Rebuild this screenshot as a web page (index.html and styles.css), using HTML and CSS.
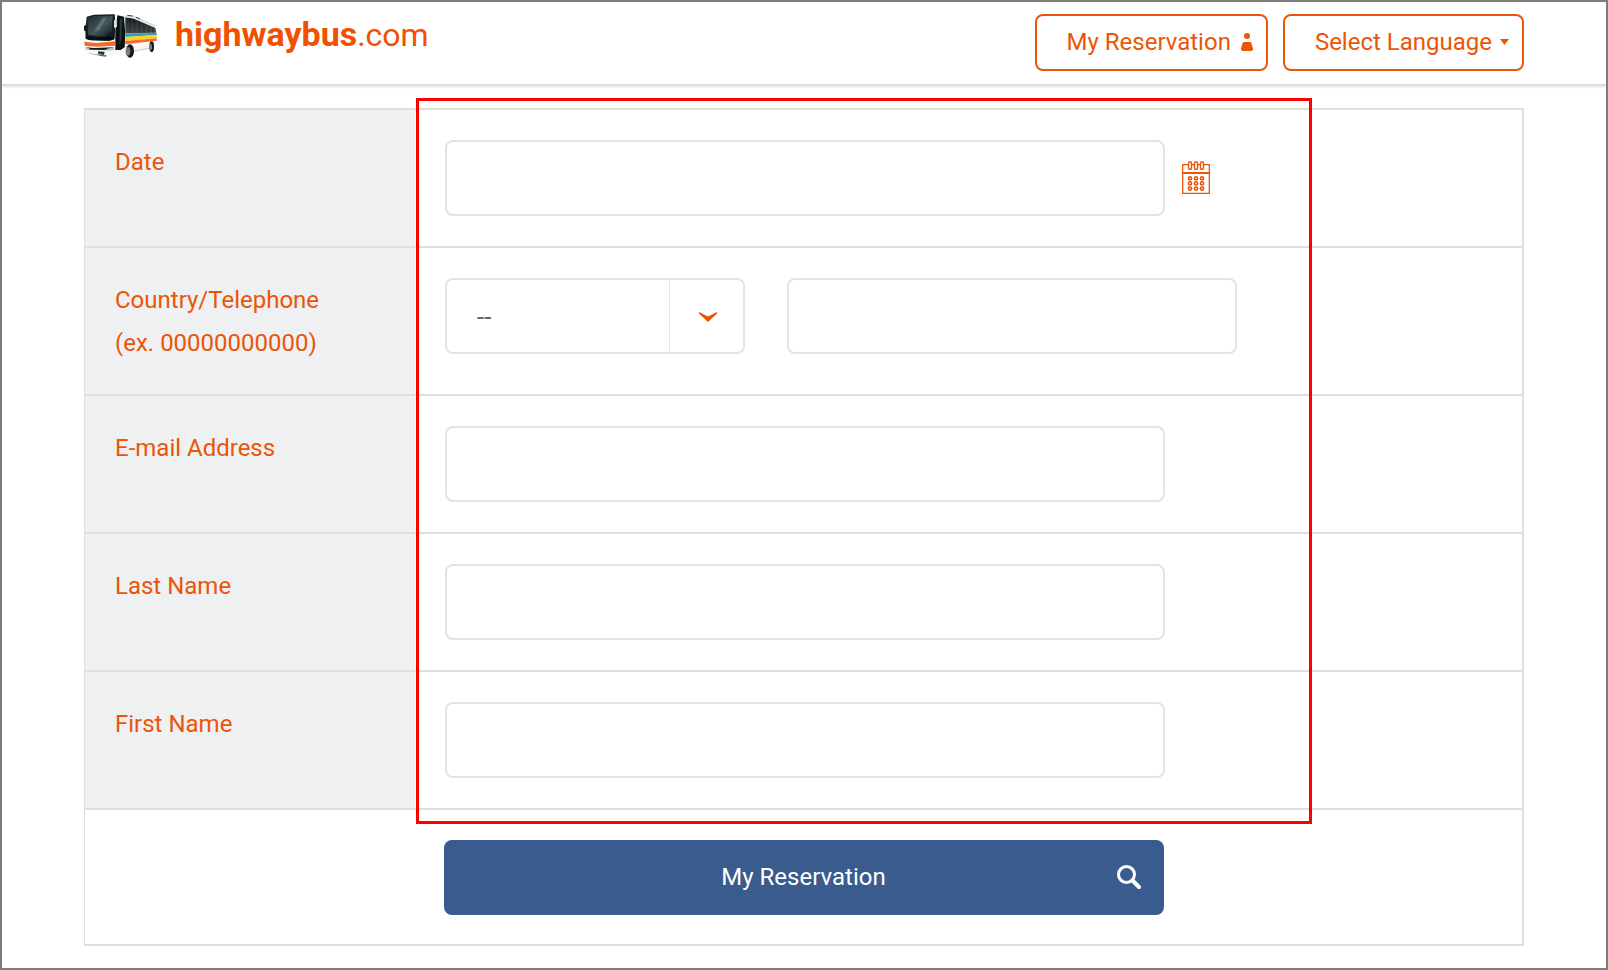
FILE: index.html
```html
<!DOCTYPE html>
<html lang="en">
<head>
<meta charset="utf-8">
<title>highwaybus.com - My Reservation</title>
<link rel="stylesheet" href="styles.css">
</head>
<body>
<div class="frame">
  <header class="header">
    <div class="container header-inner">
      <a class="logo" href="#">
        <svg class="logo-bus" viewBox="0 0 222 132" aria-hidden="true">
          <defs>
            <linearGradient id="glass" x1="0" y1="0" x2="1" y2="1"><stop offset="0" stop-color="#1d2a2d"/><stop offset=".55" stop-color="#43565b"/><stop offset="1" stop-color="#12191a"/></linearGradient>
            <linearGradient id="side" x1="0" y1="0" x2="0" y2="1"><stop offset="0" stop-color="#1b2024"/><stop offset="1" stop-color="#464e54"/></linearGradient>
          </defs>
          <path d="M8 6 30 2 96 0 118 2 150 8 166 14 214 38 218 44 218 90 210 104 148 116 112 122 60 126 6 118 1 106 0 50Z" fill="#f8f8f8"/>
          <path d="M8 8 30 2 92 1 94 30 92 76 78 80 20 79 5 74 4 48Z" fill="#141d1f"/>
          <path d="M10 12 30 6 86 5 84 50 60 68 12 62Z" fill="url(#glass)"/>
          <path d="M56 12 70 10 44 50 30 52Z" fill="#5c6f73"/>
          <path d="M6 66 40 72 90 66 90 76 70 80 16 78 5 74Z" fill="#080d0d"/>
          <path d="M0 36 8 32 8 50 0 50Z" fill="#11191b"/>
          <path d="M100 4 120 8 124 60 122 100 110 108 94 108 94 50Z" fill="#0c1112"/>
          <path d="M108 14 115 14 112 80 106 92Z" fill="#263a33"/>
          <path d="M90 18 98 20 99 38 90 42Z" fill="#dfe3e3"/>
          <path d="M124 10 150 14 214 42 217 56 124 58Z" fill="url(#side)"/>
          <path d="M138 12V57M152 16V57M166 22V57M180 28V57M194 34V57M206 39V57" stroke="#12171a" stroke-width="1.500"/>
          <path d="M122 7 150 8 214 37" fill="none" stroke="#d6dadb" stroke-width="5"/>
          <path d="M130 4 146 6M156 10 168 15" stroke="#3a4246" stroke-width="3"/>
          <path d="M124 58 218 57 218 63 124 69Z" fill="#3a9ea6"/>
          <path d="M124 69 218 63 218 73 124 81Z" fill="#f9cf2d"/>
          <path d="M124 81 218 73 218 80 124 91Z" fill="#f36b26"/>
          <path d="M1 83 36 87 94 82 94 95 36 98 2 95Z" fill="#f26a2c"/>
          <path d="M6 100 30 102 88 100 84 105 60 108 18 107Z" fill="#171d1e"/>
          <path d="M3 100 16 102 16 109 5 106ZM68 104 90 100 90 108 70 110Z" fill="#b3c1cc"/>
          <path d="M42 112 62 113 60 123 43 121Z" fill="#18491f"/>
          <path d="M6 116 42 122 68 124 66 128 54 127Z" fill="#5d6465"/>
          <ellipse cx="138" cy="111" rx="12" ry="20" fill="#16191a"/>
          <ellipse cx="132" cy="112" rx="7" ry="13" fill="#747b7c"/>
          <ellipse cx="203" cy="98" rx="7" ry="16" fill="#16191a"/>
          <ellipse cx="200" cy="99" rx="4" ry="10" fill="#747b7c"/>
          <path d="M150 111 194 103" stroke="#b4b8b8" stroke-width="2"/>
        </svg>
        <span class="logo-text"><b>highwaybus</b>.com</span>
      </a>
      <nav class="header-nav">
        <a class="nav-button" href="#">My Reservation
          <svg class="icon-person" viewBox="0 0 12 18" aria-hidden="true"><circle cx="6" cy="3" r="3"/><path d="M3 9h6q1 0 1.400 1L12 15.500q.2 2-1.500 2.500h-9Q-.2 17.500 0 15.500L1.600 10Q2 9 3 9Z"/></svg>
        </a>
        <button class="nav-button" type="button">Select Language
          <svg class="icon-caret" viewBox="0 0 9 6" aria-hidden="true"><path d="M0 0h9L4.500 6Z"/></svg>
        </button>
      </nav>
    </div>
  </header>
  <main class="container">
    <form class="form">
      <div class="row">
        <label class="label" for="date">Date</label>
        <div class="field">
          <input class="input" id="date" type="text">
          <button class="calendar" type="button" aria-label="Open calendar">
            <svg viewBox="0 0 28 33" aria-hidden="true">
              <g fill="none" stroke="#eb5507">
                <path d="M.6 3.600h26.800v28.800H.6Z" stroke-width="1.400"/>
                <path d="M0 12h28" stroke-width="2"/>
                <g fill="#fff" stroke-width="1.400"><rect x="6.500" y=".7" width="3" height="7.800" rx="1.500"/><rect x="12.500" y=".7" width="3" height="7.800" rx="1.500"/><rect x="18.500" y=".7" width="3" height="7.800" rx="1.500"/></g>
                <g stroke-width="1.600"><circle cx="8" cy="17.300" r="1.600"/><circle cx="14" cy="17.300" r="1.600"/><circle cx="20" cy="17.300" r="1.600"/><circle cx="8" cy="22.400" r="1.600"/><circle cx="14" cy="22.400" r="1.600"/><circle cx="20" cy="22.400" r="1.600"/><circle cx="8" cy="27.600" r="1.600"/><circle cx="14" cy="27.600" r="1.600"/><circle cx="20" cy="27.600" r="1.600"/></g>
              </g>
            </svg>
          </button>
        </div>
      </div>
      <div class="row row-tall">
        <label class="label" for="tel">Country/Telephone<br>(ex. 00000000000)</label>
        <div class="field">
          <div class="select-wrap">
            <select class="select" aria-label="Country"><option>--</option></select>
            <span class="select-arrow"><svg viewBox="0 0 18 10" aria-hidden="true"><path d="M0 0 9 4.600 18 0V1.500L9 10 0 1.500Z"/></svg></span>
          </div>
          <input class="input input-tel" id="tel" type="tel">
        </div>
      </div>
      <div class="row">
        <label class="label" for="email">E-mail Address</label>
        <div class="field"><input class="input" id="email" type="email"></div>
      </div>
      <div class="row">
        <label class="label" for="last">Last Name</label>
        <div class="field"><input class="input" id="last" type="text"></div>
      </div>
      <div class="row">
        <label class="label" for="first">First Name</label>
        <div class="field"><input class="input" id="first" type="text"></div>
      </div>
      <div class="actions">
        <button class="submit" type="submit">My Reservation
          <svg class="icon-search" viewBox="0 0 24 24" aria-hidden="true"><circle cx="9.500" cy="9.500" r="8" stroke-width="3"/><path d="m15.500 15.500 6.500 6.500" stroke-width="4"/></svg>
        </button>
      </div>
      <div class="highlight"></div>
    </form>
  </main>
</div>
</body>
</html>
```
FILE: styles.css
```css
* {
  box-sizing: border-box;
}

body {
  margin: 0;
  background: #fff;
  color: #eb5507;
  font: 24px/43px Roboto, "Liberation Sans", sans-serif;
}

.frame {
  min-height: 100vh;
  border: 2px solid #7f7c7c;
}

.container {
  max-width: 1440px;
  margin: 0 auto;
}

.header {
  border-bottom: 2px solid #dedede;
  box-shadow: 0 1px 3px #e4e4e4;
  clip-path: inset(0 0 -4px);
}

.header-inner {
  display: flex;
  justify-content: space-between;
  align-items: flex-start;
  height: 82px;
  padding-top: 12px;
}

.logo {
  display: flex;
  gap: 17px;
  color: #f05000;
  text-decoration: none;
}

.logo-bus {
  width: 74px;
  height: 44px;
}

.logo-text {
  font-size: 32px;
  line-height: 41px;
}

.logo-text b {
  font-size: 34px;
  font-weight: 700;
}

.header-nav {
  display: flex;
  gap: 15px;
}

.nav-button {
  display: flex;
  align-items: center;
  height: 57px;
  padding: 0 13px 0 30px;
  border: 2px solid #eb5507;
  border-radius: 8px;
  background: #fff;
  color: #eb5507;
  font: inherit;
  text-decoration: none;
}

.nav-button svg {
  margin-bottom: 2px;
  fill: #eb5507;
}

.icon-person {
  width: 12px;
  height: 18px;
  margin-left: 10px;
}

.icon-caret {
  width: 9px;
  height: 6px;
  margin-left: 8px;
}

.form {
  position: relative;
  margin-top: 22px;
  border: 2px solid #dfdfdf;
  border-left-width: 1px;
}

.row {
  display: grid;
  grid-template-columns: 330px 1fr;
  border-bottom: 2px solid #dfdfdf;
}

.label {
  padding: 31px 30px 29px;
  background: #eff0f2;
}

.field {
  display: flex;
  align-items: center;
  padding: 30px;
}

.row-tall .field {
  align-items: flex-start;
  padding-bottom: 40px;
}

.input {
  width: 720px;
  height: 76px;
  padding: 0 28px;
  border: 2px solid #e4e4e4;
  border-radius: 8px;
  background: #fff;
  color: #666;
  font: inherit;
}

.input-tel {
  width: 450px;
}

.calendar {
  display: flex;
  margin-left: 17px;
  padding: 0 0 2px;
  border: 0;
  background: none;
}

.calendar svg {
  width: 28px;
  height: 33px;
}

.select-wrap {
  display: grid;
  grid-template-columns: 1fr 76px;
  width: 300px;
  margin-right: 42px;
}

.select {
  grid-area: 1 / 1 / 2 / 3;
  height: 76px;
  padding: 2px 30px 0;
  border: 2px solid #e4e4e4;
  border-radius: 8px;
  background: #fff;
  color: #666;
  font: inherit;
  font-size: 26px;
  appearance: none;
}

.select-arrow {
  display: flex;
  grid-area: 1 / 2 / 2 / 3;
  align-items: center;
  justify-content: center;
  margin: 2px 0;
  padding-top: 2px;
  border-left: 1px solid #e4e4e4;
  pointer-events: none;
}

.select-arrow svg {
  width: 18px;
  height: 10px;
  fill: #f05000;
}

.actions {
  display: flex;
  justify-content: center;
  padding: 30px 0 29px;
}

.submit {
  display: grid;
  grid-template-columns: 1fr auto 1fr;
  align-items: center;
  width: 720px;
  height: 75px;
  padding: 0 23px;
  border: 0;
  border-radius: 8px;
  background: #395b8e;
  color: #fff;
  font: inherit;
}

.submit::before {
  content: "";
}

.icon-search {
  justify-self: end;
  width: 24px;
  height: 24px;
  margin-bottom: 2px;
  fill: none;
  stroke: #fff;
  stroke-linecap: round;
}

.highlight {
  position: absolute;
  top: -12px;
  left: 331px;
  width: 896px;
  height: 726px;
  border: 3px solid #f00;
  pointer-events: none;
}
```
